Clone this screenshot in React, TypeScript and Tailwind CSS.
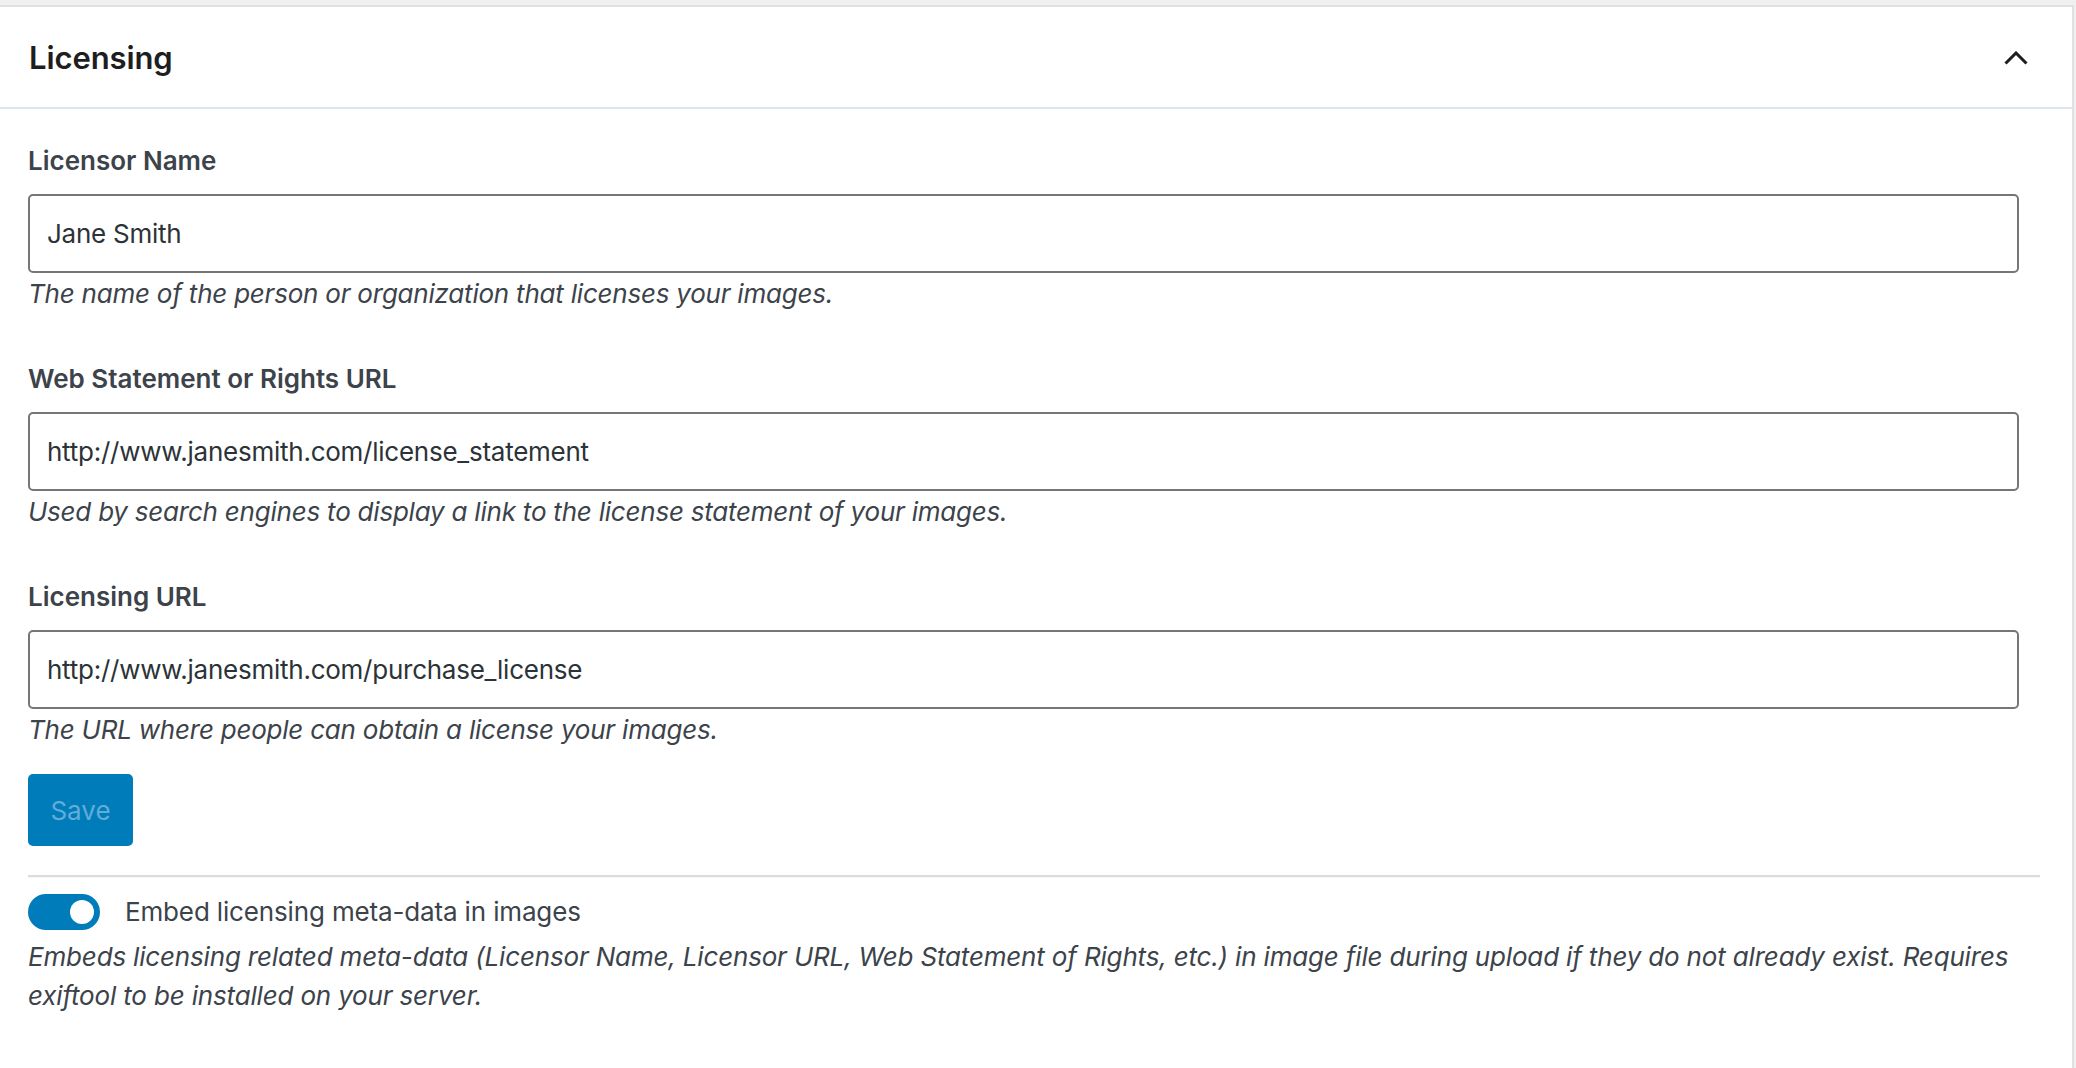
import React from "react";

const font = { fontFamily: 'Inter, "Noto Sans", sans-serif' };

function Field({
  label,
  value,
  help,
  first,
}: {
  label: string;
  value: string;
  help: string;
  first?: boolean;
}) {
  return (
    <div className={first ? "" : "mt-[46px]"}>
      <div className="text-[26px] leading-[39px] font-semibold text-[#3c434a]">{label}</div>
      <div className="mt-[14px] h-[79px] w-[1991px] rounded-[5px] border-2 border-[#767676] bg-white flex items-center pl-[17px] text-[26px] text-[#2c3338] tracking-[-0.25px]">
        {value}
      </div>
      <div className="mt-[1px] text-[26px] leading-[39px] italic text-[#3c434a] tracking-[-0.22px]">{help}</div>
    </div>
  );
}

export default function App() {
  return (
    <div className="w-full h-[1068px] bg-[#f0f0f1] pt-[5px] pr-[2px] overflow-hidden" style={font}>
      <div className="bg-white border-t-2 border-r-2 border-[#e0e0e3] h-[1100px]">
        <div className="h-[102px] border-b-2 border-[#dde4ee] flex items-center justify-between pl-[29px] pr-[44px]">
          <div className="mt-[2px] text-[31px] font-semibold text-[#1e1e1e] tracking-[-0.1px]">Licensing</div>
          <svg width="24" height="14" viewBox="0 0 24 14" className="mt-[1px]">
            <polyline points="1.5,12.5 12,2 22.5,12.5" fill="none" stroke="#1e1e1e" strokeWidth="3" />
          </svg>
        </div>
        <div className="pl-[28px] pr-[32px] pt-[32px]">
          <Field
            first
            label="Licensor Name"
            value="Jane Smith"
            help="The name of the person or organization that licenses your images."
          />
          <Field
            label="Web Statement or Rights URL"
            value="http://www.janesmith.com/license_statement"
            help="Used by search engines to display a link to the license statement of your images."
          />
          <Field
            label="Licensing URL"
            value="http://www.janesmith.com/purchase_license"
            help="The URL where people can obtain a license your images."
          />
          <button className="mt-[25px] h-[72px] w-[105px] rounded-[5px] bg-[#007cba] text-[26px] text-[#62acd8] flex items-center justify-center">
            Save
          </button>
          <div className="mt-[29px] border-t-2 border-[#dcdcde] border-b border-b-[#f6f7f7]" />
          <div className="mt-[14px] flex items-center">
            <div className="w-[72px] h-[36px] rounded-full bg-[#007cba] flex items-center justify-end pr-[6px]">
              <div className="w-[24px] h-[24px] rounded-full bg-white" />
            </div>
            <div className="ml-[25px] text-[26px] leading-[39px] text-[#3c434a] tracking-[-0.15px]">Embed licensing meta-data in images</div>
          </div>
          <div className="mt-[6px] text-[26px] leading-[39px] italic text-[#3c434a] whitespace-nowrap tracking-[-0.17px]">
            Embeds licensing related meta-data (Licensor Name, Licensor URL, Web Statement of Rights, etc.) in image file during upload if they do not already exist. Requires
            <br />
            exiftool to be installed on your server.
          </div>
        </div>
      </div>
    </div>
  );
}
